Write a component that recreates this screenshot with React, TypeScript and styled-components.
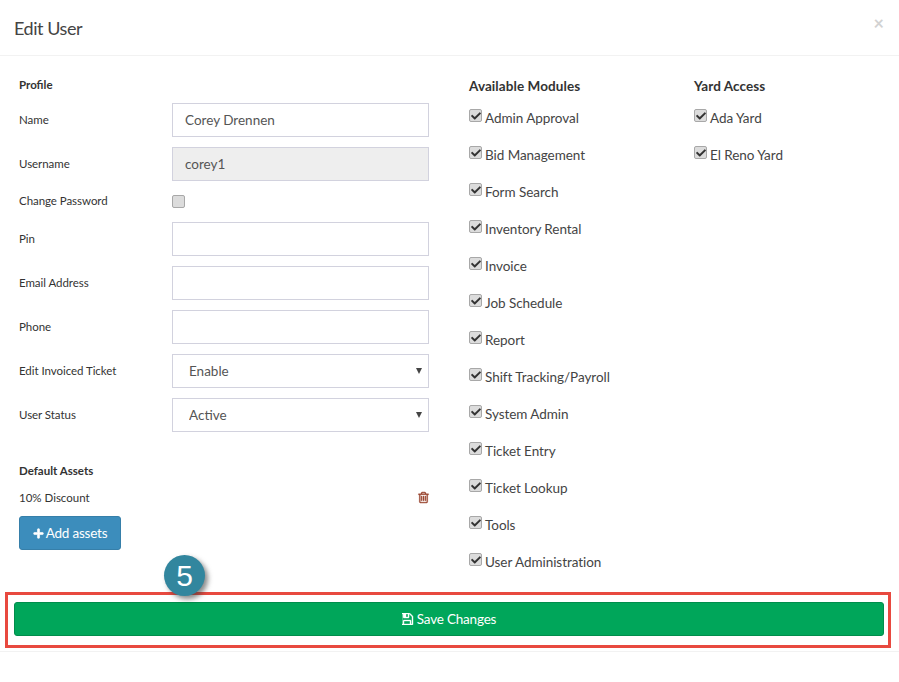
import React from "react";
import styled, { createGlobalStyle } from "styled-components";
import { FaPlus, FaCheck } from "react-icons/fa";

const Global = createGlobalStyle`
  html, body { margin: 0; padding: 0; background: #fff; }
  body { font-family: "Lato", "Open Sans", sans-serif; color: #333; }
  * { box-sizing: border-box; }
`;

const Page = styled.div`
  position: relative;
  width: 899px;
  height: 682px;
  overflow: hidden;
  background: #fff;
`;
const Header = styled.header`
  height: 56px;
  padding: 0 14px;
  display: flex;
  align-items: center;
  justify-content: space-between;
  border-bottom: 1px solid #f2f2f2;
`;
const Title = styled.h4`
  margin: 0;
  font-size: 18px;
  font-weight: 400;
  color: #444;
  letter-spacing: -0.45px;
`;
const Close = styled.span`
  margin-right: 1px;
  margin-top: -9px;
  font-size: 18px;
  font-weight: 700;
  line-height: 1;
  color: #d2d2d2;
`;
const Body = styled.div`
  display: flex;
  padding: 0 19px;
`;
const ProfileCol = styled.section`
  width: 410px;
  padding-top: 22px;
`;
const SectionLabel = styled.div`
  height: 14px;
  line-height: 14px;
  font-size: 11.5px;
  font-weight: 700;
  color: #333;
  white-space: nowrap;
`;
const ProfileRows = styled.div`
  margin-top: 11px;
`;
const Row = styled.div<{ $h?: number }>`
  display: grid;
  grid-template-columns: 153px 257px;
  align-items: center;
  height: ${(p) => p.$h ?? 34}px;
  margin-bottom: 10px;
`;
const FieldLabel = styled.label`
  padding-bottom: 2px;
  font-size: 11.5px;
  letter-spacing: -0.05px;
  color: #333;
  white-space: nowrap;
`;
const TextInput = styled.input`
  width: 257px;
  height: 34px;
  padding: 0 12px;
  border: 1px solid #d2d2de;
  background: ${(p) => (p.disabled ? "#eee" : "#fff")};
  font: 13.5px "Lato", sans-serif;
  color: #555;
  outline: none;
`;
const SelectWrap = styled.div`
  position: relative;
  width: 257px;
  height: 34px;
`;
const Select = styled.select`
  appearance: none;
  width: 100%;
  height: 100%;
  padding: 0 16px;
  border: 1px solid #d2d2de;
  border-radius: 0;
  background: #fff;
  font: 13.5px "Lato", sans-serif;
  color: #555;
  outline: none;
`;
const Arrow = styled.span`
  position: absolute;
  right: 7px;
  top: 14px;
  width: 0;
  height: 0;
  border-left: 3px solid transparent;
  border-right: 3px solid transparent;
  border-top: 6px solid #444;
`;
const Check = styled.span`
  display: inline-flex;
  flex: none;
  align-items: center;
  justify-content: center;
  width: 13px;
  height: 13px;
  border: 1px solid #a8a8a8;
  border-radius: 2px;
  background: #dcdcdc;
  color: #333;
  font-size: 10px;
`;
const Assets = styled.div`
  margin-top: 32px;
`;
const AssetRow = styled.div`
  display: flex;
  align-items: center;
  justify-content: space-between;
  height: 14px;
  margin-top: 12px;
  font-size: 11.5px;
`;
const TrashIcon = styled.svg`
  width: 13px;
  height: 13px;
  margin-right: -1px;
  fill: #96402a;
  stroke: #96402a;
  stroke-width: 50px;
`;
const AddButton = styled.button`
  display: flex;
  align-items: center;
  justify-content: center;
  gap: 2px;
  width: 102px;
  height: 34px;
  margin-top: 12px;
  padding: 0;
  border: 1px solid #367fa9;
  border-radius: 3px;
  background: #3c8dbc;
  color: #fff;
  font: 13.5px "Lato", sans-serif;
  letter-spacing: -0.2px;
  svg { stroke: #fff; stroke-width: 30px; }
`;
const ModulesCol = styled.section`
  margin-left: 40px;
  width: 225px;
  padding-top: 22px;
`;
const YardCol = styled(ModulesCol)`
  margin-left: 0;
  width: 180px;
`;
const ColumnTitle = styled.div`
  height: 16px;
  line-height: 16px;
  font-size: 13.5px;
  font-weight: 700;
  color: #333;
  white-space: nowrap;
  letter-spacing: 0.08px;
`;
const CheckList = styled.div`
  display: flex;
  flex-direction: column;
  gap: 21px;
  margin-top: 15px;
`;
const CheckRow = styled.label`
  display: flex;
  align-items: flex-start;
  gap: 3px;
  height: 16px;
  font-size: 13.5px;
  line-height: 18px;
  letter-spacing: -0.05px;
  color: #444;
  white-space: nowrap;
`;
const Footer = styled.footer`
  position: absolute;
  left: 0;
  right: 0;
  top: 602px;
  padding: 0 15px 0 14px;
`;
const SaveButton = styled.button`
  display: flex;
  align-items: center;
  justify-content: center;
  gap: 3px;
  width: 100%;
  height: 34px;
  padding: 0;
  border: 1px solid #008d4c;
  border-radius: 3px;
  background: #00a65a;
  color: #fff;
  font: 13.5px "Lato", sans-serif;
  letter-spacing: -0.2px;
`;
const SaveIcon = styled.svg`
  width: 12px;
  height: 12px;
  fill: #fff;
  stroke: #fff;
  stroke-width: 50px;
`;
const FooterRule = styled.div`
  position: absolute;
  left: 0;
  right: 0;
  top: 651px;
  border-top: 1px solid #f2f2f2;
`;
const Highlight = styled.div`
  position: absolute;
  left: 5px;
  top: 592px;
  width: 886px;
  height: 56px;
  border: 3px solid #e8493f;
  pointer-events: none;
`;
const Badge = styled.div`
  position: absolute;
  left: 164px;
  top: 555px;
  width: 41px;
  height: 41px;
  border-radius: 50%;
  display: flex;
  align-items: center;
  justify-content: center;
  background: #32869e;
  color: #fff;
  font: 30px "Liberation Sans", sans-serif;
  box-shadow: 3px 3px 5px rgba(60, 60, 60, 0.6);
`;

const modules = ["Admin Approval","Bid Management","Form Search","Inventory Rental","Invoice","Job Schedule","Report","Shift Tracking/Payroll","System Admin","Ticket Entry","Ticket Lookup","Tools","User Administration"];
const yards = ["Ada Yard", "El Reno Yard"];

const CheckItem = ({ label }: { label: string }) => (
  <CheckRow>
    <Check><FaCheck /></Check>
    {label}
  </CheckRow>
);

export default function App() {
  return (
    <Page>
      <Global />
      <Header>
        <Title>Edit User</Title>
        <Close>×</Close>
      </Header>
      <Body>
        <ProfileCol>
          <SectionLabel>Profile</SectionLabel>
          <ProfileRows>
            <Row><FieldLabel>Name</FieldLabel><TextInput defaultValue="Corey Drennen" /></Row>
            <Row><FieldLabel>Username</FieldLabel><TextInput disabled defaultValue="corey1" /></Row>
            <Row $h={21}><FieldLabel>Change Password</FieldLabel><Check /></Row>
            <Row><FieldLabel>Pin</FieldLabel><TextInput /></Row>
            <Row><FieldLabel>Email Address</FieldLabel><TextInput /></Row>
            <Row><FieldLabel>Phone</FieldLabel><TextInput /></Row>
            <Row>
              <FieldLabel>Edit Invoiced Ticket</FieldLabel>
              <SelectWrap><Select defaultValue="Enable"><option>Enable</option></Select><Arrow /></SelectWrap>
            </Row>
            <Row>
              <FieldLabel>User Status</FieldLabel>
              <SelectWrap><Select defaultValue="Active"><option>Active</option></Select><Arrow /></SelectWrap>
            </Row>
          </ProfileRows>
          <Assets>
            <SectionLabel>Default Assets</SectionLabel>
            <AssetRow>
              10% Discount
              <TrashIcon viewBox="0 0 1792 1792">
                <path d="M704 736v576q0 14-9 23t-23 9h-64q-14 0-23-9t-9-23v-576q0-14 9-23t23-9h64q14 0 23 9t9 23zm256 0v576q0 14-9 23t-23 9h-64q-14 0-23-9t-9-23v-576q0-14 9-23t23-9h64q14 0 23 9t9 23zm256 0v576q0 14-9 23t-23 9h-64q-14 0-23-9t-9-23v-576q0-14 9-23t23-9h64q14 0 23 9t9 23zm128 724v-948h-896v948q0 22 7 40.500t14.500 27 10.500 8.500h832q3 0 10.500-8.500t14.500-27 7-40.500zm-672-1076h448l-48-117q-7-9-17-11h-317q-10 2-17 11zm928 32v64q0 14-9 23t-23 9h-96v948q0 83-47 143.500t-113 60.500h-832q-66 0-113-58.500t-47-141.500v-952h-96q-14 0-23-9t-9-23v-64q0-14 9-23t23-9h309l70-167q15-37 54-63t79-26h320q40 0 79 26t54 63l70 167h309q14 0 23 9t9 23z" />
              </TrashIcon>
            </AssetRow>
            <AddButton><FaPlus size={11} />Add assets</AddButton>
          </Assets>
        </ProfileCol>
        <ModulesCol>
          <ColumnTitle>Available Modules</ColumnTitle>
          <CheckList>{modules.map((m) => <CheckItem key={m} label={m} />)}</CheckList>
        </ModulesCol>
        <YardCol>
          <ColumnTitle>Yard Access</ColumnTitle>
          <CheckList>{yards.map((m) => <CheckItem key={m} label={m} />)}</CheckList>
        </YardCol>
      </Body>
      <Footer>
        <SaveButton>
          <SaveIcon viewBox="128 128 1536 1536">
            <path d="M384 1536h768v-384h-768v384zm896 0h128v-896q0-14-10-34.500t-20-30.500l-281-281q-10-10-29.500-20t-34.500-10v416q0 40-28 68t-68 28h-576q-40 0-68-28t-28-68v-416h-128v1280h128v-416q0-40 28-68t68-28h832q40 0 68 28t28 68v416zm-384-928v-320q0-13-9.500-22.500t-22.500-9.500h-192q-13 0-22.500 9.500t-9.500 22.500v320q0 13 9.500 22.500t22.500 9.500h192q13 0 22.500-9.500t9.500-22.500zm640 32v928q0 40-28 68t-68 28h-1344q-40 0-68-28t-28-68v-1344q0-40 28-68t68-28h928q40 0 88 20t76 48l280 280q28 28 48 76t20 88z" />
          </SaveIcon>
          Save Changes
        </SaveButton>
      </Footer>
      <FooterRule />
      <Highlight />
      <Badge>5</Badge>
    </Page>
  );
}
